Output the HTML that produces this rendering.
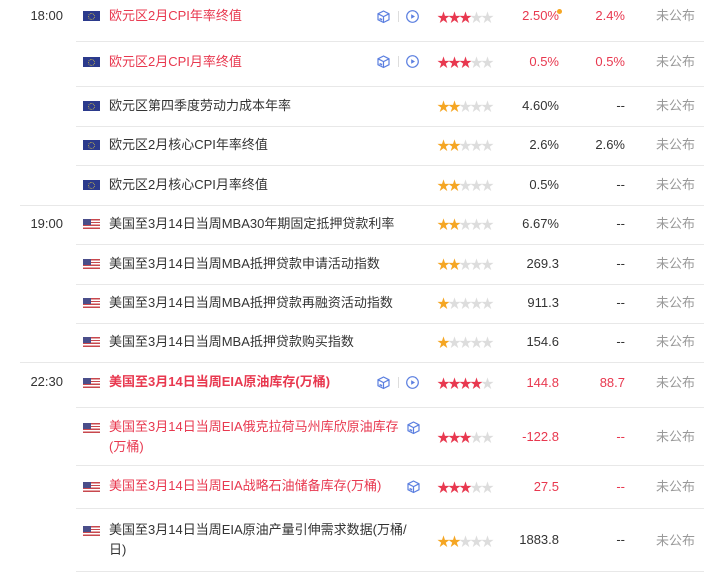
<!DOCTYPE html>
<html><head><meta charset="utf-8"><style>
body{margin:0;width:704px;height:572px;background:#fff;overflow:hidden;position:relative;font-family:"Liberation Sans","Noto Sans CJK SC",sans-serif;font-size:13px;color:#333}
.a{position:absolute;white-space:nowrap;line-height:20px}
.ln{position:absolute;height:1px;background:#e8e8e8;right:0}
.t{left:0;width:63px;text-align:right;font-size:13px;color:#333}
.f{position:absolute;left:83px;width:17px;height:10px}
.eu{background:#2b3a8c}
.eu:after{content:"";position:absolute;left:5px;top:2px;width:5px;height:5px;border:1px dotted #c9b84a;border-radius:50%}
.us{background:repeating-linear-gradient(#c8484e 0 1.4px,#fff 1.4px 2.8px)}
.us:before{content:"";position:absolute;left:0;top:0;width:8px;height:6px;background:#4a4e8a}
.n{left:109px;font-size:13px}
.r{color:#e8384f}
.b{font-weight:bold}
.st{left:437px;font-size:13px;color:#ddd}
.st span{display:inline-block;width:11px;text-align:center}
.st .o{color:#f5a623}.st .rd{color:#e8384f}
.p{left:470px;width:89px;text-align:right}
.c{left:560px;width:65px;text-align:right}
.w{left:656px;color:#999}
.ic{position:absolute}
</style></head><body>
<div class="ln" style="left:76px;top:41px"></div>
<div class="ln" style="left:76px;top:86px"></div>
<div class="ln" style="left:76px;top:126px"></div>
<div class="ln" style="left:76px;top:165px"></div>
<div class="ln" style="left:20px;top:205px"></div>
<div class="ln" style="left:76px;top:244px"></div>
<div class="ln" style="left:76px;top:284px"></div>
<div class="ln" style="left:76px;top:323px"></div>
<div class="ln" style="left:20px;top:362px"></div>
<div class="ln" style="left:76px;top:407px"></div>
<div class="ln" style="left:76px;top:465px"></div>
<div class="ln" style="left:76px;top:508px"></div>
<div class="ln" style="left:76px;top:571px"></div>

<svg width="0" height="0" style="position:absolute"><defs>
<g id="cube" fill="none" stroke="#5b7fe0" stroke-width="1.2"><path d="M6.5 1 L12 3.8 L12 9.7 L6.5 12.5 L1 9.7 L1 3.8 Z M1 3.8 L6.5 6.6 L12 3.8 M6.5 6.6 L6.5 12.5"/><path d="M3.2 8 v2 M4.6 8.6 v1.8"/></g>
<g id="play"><circle cx="6.5" cy="6.5" r="5.8" fill="none" stroke="#5b7fe0" stroke-width="1.2"/><path d="M5.2 4.2 L9 6.5 L5.2 8.8Z" fill="#5b7fe0"/></g>
</defs></svg>

<div class="a t" style="top:6px">18:00</div>
<div class="f eu" style="top:11px"></div>
<div class="a n r" style="top:6px">欧元区2月CPI年率终值</div>
<svg class="ic" style="left:377px;top:10px" width="13" height="14"><use href="#cube"/></svg>
<div class="ic" style="left:398px;top:11px;width:1px;height:11px;background:#ddd"></div>
<svg class="ic" style="left:406px;top:10px" width="13" height="13"><use href="#play"/></svg>
<div class="a st" style="top:8px"><span class="rd">★</span><span class="rd">★</span><span class="rd">★</span><span>★</span><span>★</span></div>
<div class="a p r" style="top:6px">2.50%</div>
<div class="ic" style="left:557px;top:9px;width:5px;height:5px;border-radius:50%;background:#f5a623"></div>
<div class="a c r" style="top:6px">2.4%</div>
<div class="a w" style="top:6px">未公布</div>

<div class="f eu" style="top:57px"></div>
<div class="a n r" style="top:52px">欧元区2月CPI月率终值</div>
<svg class="ic" style="left:377px;top:55px" width="13" height="14"><use href="#cube"/></svg>
<div class="ic" style="left:398px;top:56px;width:1px;height:11px;background:#ddd"></div>
<svg class="ic" style="left:406px;top:55px" width="13" height="13"><use href="#play"/></svg>
<div class="a st" style="top:53px"><span class="rd">★</span><span class="rd">★</span><span class="rd">★</span><span>★</span><span>★</span></div>
<div class="a p r" style="top:52px">0.5%</div>
<div class="a c r" style="top:52px">0.5%</div>
<div class="a w" style="top:52px">未公布</div>

<div class="f eu" style="top:101px"></div>
<div class="a n" style="top:96px">欧元区第四季度劳动力成本年率</div>
<div class="a st" style="top:97px"><span class="o">★</span><span class="o">★</span><span>★</span><span>★</span><span>★</span></div>
<div class="a p" style="top:96px">4.60%</div>
<div class="a c" style="top:96px">--</div>
<div class="a w" style="top:96px">未公布</div>

<div class="f eu" style="top:140px"></div>
<div class="a n" style="top:135px">欧元区2月核心CPI年率终值</div>
<div class="a st" style="top:136px"><span class="o">★</span><span class="o">★</span><span>★</span><span>★</span><span>★</span></div>
<div class="a p" style="top:135px">2.6%</div>
<div class="a c" style="top:135px">2.6%</div>
<div class="a w" style="top:135px">未公布</div>

<div class="f eu" style="top:180px"></div>
<div class="a n" style="top:175px">欧元区2月核心CPI月率终值</div>
<div class="a st" style="top:176px"><span class="o">★</span><span class="o">★</span><span>★</span><span>★</span><span>★</span></div>
<div class="a p" style="top:175px">0.5%</div>
<div class="a c" style="top:175px">--</div>
<div class="a w" style="top:175px">未公布</div>

<div class="a t" style="top:214px">19:00</div>
<div class="f us" style="top:219px"></div>
<div class="a n" style="top:214px">美国至3月14日当周MBA30年期固定抵押贷款利率</div>
<div class="a st" style="top:215px"><span class="o">★</span><span class="o">★</span><span>★</span><span>★</span><span>★</span></div>
<div class="a p" style="top:214px">6.67%</div>
<div class="a c" style="top:214px">--</div>
<div class="a w" style="top:214px">未公布</div>

<div class="f us" style="top:259px"></div>
<div class="a n" style="top:254px">美国至3月14日当周MBA抵押贷款申请活动指数</div>
<div class="a st" style="top:255px"><span class="o">★</span><span class="o">★</span><span>★</span><span>★</span><span>★</span></div>
<div class="a p" style="top:254px">269.3</div>
<div class="a c" style="top:254px">--</div>
<div class="a w" style="top:254px">未公布</div>

<div class="f us" style="top:298px"></div>
<div class="a n" style="top:293px">美国至3月14日当周MBA抵押贷款再融资活动指数</div>
<div class="a st" style="top:294px"><span class="o">★</span><span>★</span><span>★</span><span>★</span><span>★</span></div>
<div class="a p" style="top:293px">911.3</div>
<div class="a c" style="top:293px">--</div>
<div class="a w" style="top:293px">未公布</div>

<div class="f us" style="top:337px"></div>
<div class="a n" style="top:332px">美国至3月14日当周MBA抵押贷款购买指数</div>
<div class="a st" style="top:333px"><span class="o">★</span><span>★</span><span>★</span><span>★</span><span>★</span></div>
<div class="a p" style="top:332px">154.6</div>
<div class="a c" style="top:332px">--</div>
<div class="a w" style="top:332px">未公布</div>

<div class="a t" style="top:372px">22:30</div>
<div class="f us" style="top:378px"></div>
<div class="a n r b" style="top:372px">美国至3月14日当周EIA原油库存(万桶)</div>
<svg class="ic" style="left:377px;top:376px" width="13" height="14"><use href="#cube"/></svg>
<div class="ic" style="left:398px;top:377px;width:1px;height:11px;background:#ddd"></div>
<svg class="ic" style="left:406px;top:376px" width="13" height="13"><use href="#play"/></svg>
<div class="a st" style="top:374px"><span class="rd">★</span><span class="rd">★</span><span class="rd">★</span><span class="rd">★</span><span>★</span></div>
<div class="a p r" style="top:373px">144.8</div>
<div class="a c r" style="top:373px">88.7</div>
<div class="a w" style="top:373px">未公布</div>

<div class="f us" style="top:423px"></div>
<div class="a n r" style="top:417px">美国至3月14日当周EIA俄克拉荷马州库欣原油库存</div>
<div class="a n r" style="top:437px">(万桶)</div>
<svg class="ic" style="left:407px;top:421px" width="13" height="14"><use href="#cube"/></svg>
<div class="a st" style="top:428px"><span class="rd">★</span><span class="rd">★</span><span class="rd">★</span><span>★</span><span>★</span></div>
<div class="a p r" style="top:427px">-122.8</div>
<div class="a c r" style="top:427px">--</div>
<div class="a w" style="top:427px">未公布</div>

<div class="f us" style="top:482px"></div>
<div class="a n r" style="top:476px">美国至3月14日当周EIA战略石油储备库存(万桶)</div>
<svg class="ic" style="left:407px;top:480px" width="13" height="14"><use href="#cube"/></svg>
<div class="a st" style="top:478px"><span class="rd">★</span><span class="rd">★</span><span class="rd">★</span><span>★</span><span>★</span></div>
<div class="a p r" style="top:477px">27.5</div>
<div class="a c r" style="top:477px">--</div>
<div class="a w" style="top:477px">未公布</div>

<div class="f us" style="top:526px"></div>
<div class="a n" style="top:520px">美国至3月14日当周EIA原油产量引伸需求数据(万桶/</div>
<div class="a n" style="top:540px">日)</div>
<div class="a st" style="top:532px"><span class="o">★</span><span class="o">★</span><span>★</span><span>★</span><span>★</span></div>
<div class="a p" style="top:530px">1883.8</div>
<div class="a c" style="top:530px">--</div>
<div class="a w" style="top:531px">未公布</div>
</body></html>
